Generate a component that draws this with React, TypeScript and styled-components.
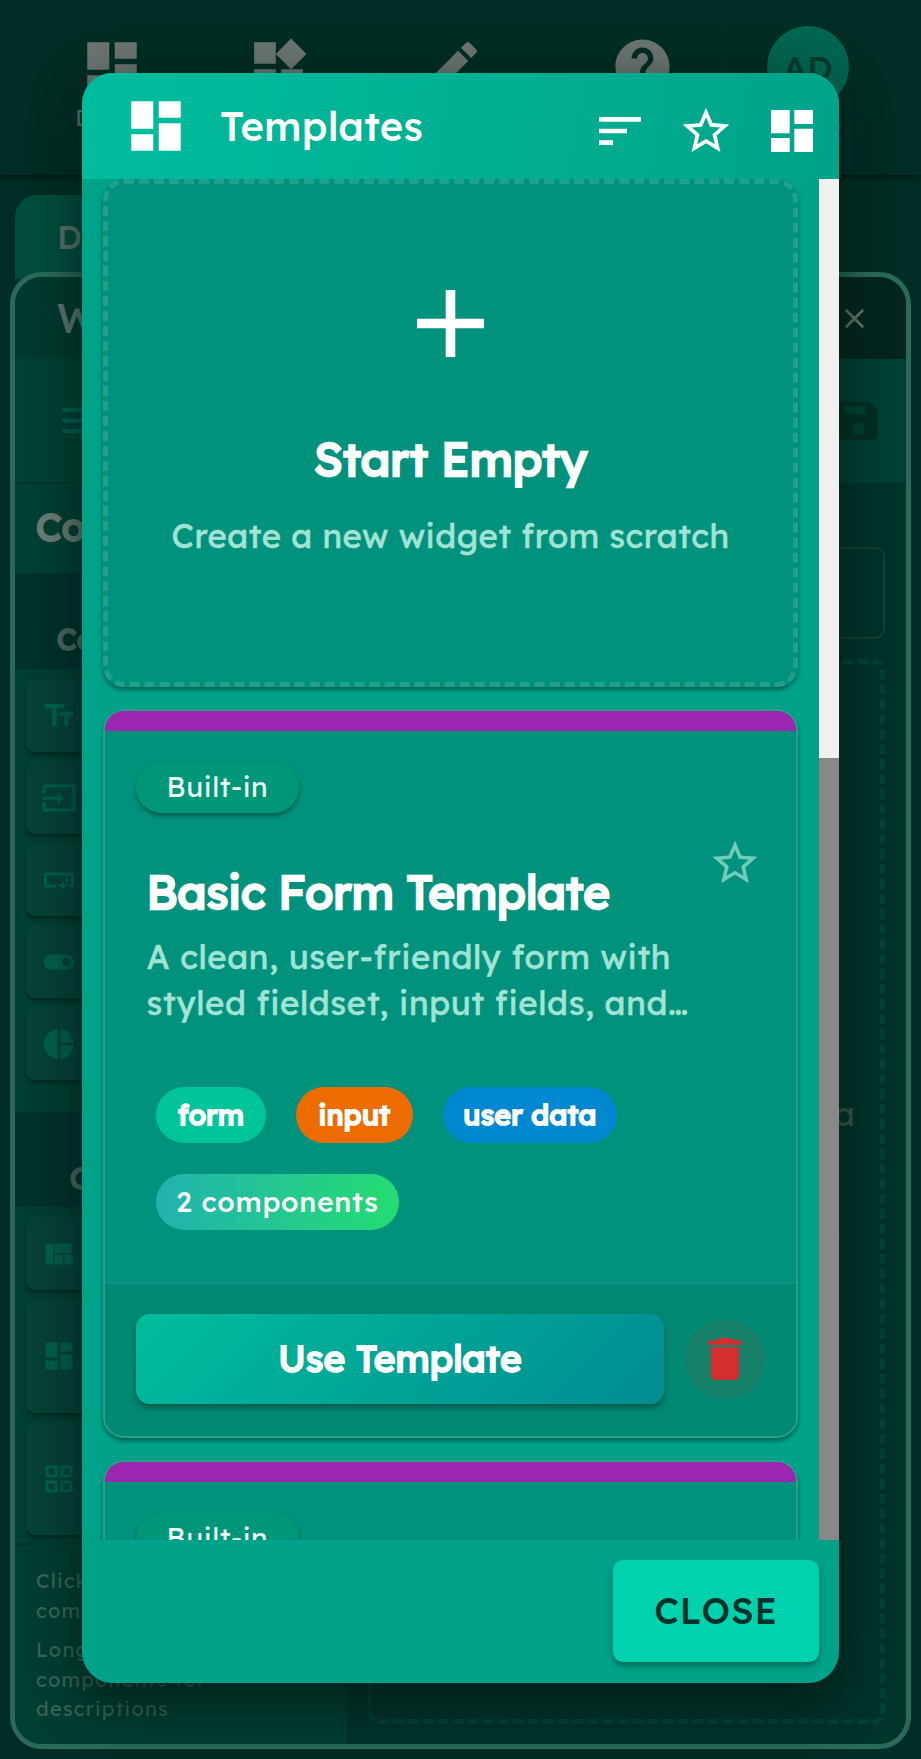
import React from 'react';
import styled, { createGlobalStyle, css } from 'styled-components';
import {
  MdAdd, MdClose, MdDashboard, MdDelete, MdEdit, MdGridView, MdHelp, MdInput, MdMenu,
  MdPieChart, MdSave, MdSmartButton, MdSort, MdStarBorder, MdTextFields, MdToggleOn,
  MdViewQuilt, MdWidgets,
} from 'react-icons/md';

const Global = createGlobalStyle`
  * { box-sizing: border-box; }
  body { margin: 0; background: #002d25; }
  button { font: inherit; border: 0; background: none; padding: 0; color: inherit; }
  h1, h2, h3, p { margin: 0; }
  svg { display: block; flex: none; }
`;

const Page = styled.div`
  position: relative;
  width: 921px;
  height: 1759px;
  overflow: hidden;
  background: #002d25;
  font-family: Lexend, Inter, 'Open Sans', sans-serif;
`;

/* Heavier look at the regular weight's advance widths. */
const emboldened = (stroke: number) => css`
  font-weight: 400;
  -webkit-text-stroke: ${stroke}px currentColor;
`;

/* ---------- application behind the dialog ---------- */

const TopBar = styled.header`
  display: flex;
  height: 175px;
  padding: 26px 30px 0 29px;
  background: #002d25;
  box-shadow: 0 2px 5px #001711;
`;

const NavItem = styled.div<{ $w: number; $before?: number }>`
  width: ${(p) => p.$w}px;
  margin-left: ${(p) => p.$before ?? 0}px;
  padding-top: 8px;
  display: flex;
  flex-direction: column;
  align-items: center;
  gap: 4px;
  color: #6b7572;
  font-size: 22px;
`;

const Account = styled.div`
  width: 82px;
  margin-left: 41px;
  display: flex;
  flex-direction: column;
  align-items: center;
  gap: 5px;
  color: #6b7572;
  font-size: 21px;
`;

const Avatar = styled.div`
  width: 82px;
  height: 82px;
  border-radius: 50%;
  background: #006650;
  color: #023b30;
  display: flex;
  align-items: center;
  justify-content: center;
  font-size: 34px;
  font-weight: 500;
`;

const NavRule = styled.div`
  width: 1px;
  height: 60px;
  background: #003128;
`;

const Tab = styled.div`
  width: 220px;
  height: 84px;
  margin: 20px 0 0 15px;
  padding: 20px 0 0 42px;
  border-radius: 22px 22px 0 0;
  background: #004d3e;
  color: #58756c;
  font-size: 33px;
  font-weight: 500;
  line-height: 44px;
`;

const Panel = styled.section`
  position: relative;
  width: 901px;
  height: 1477px;
  margin: -7px 0 0 10px;
  border: 5px solid #296a5b;
  border-radius: 32px;
  overflow: hidden;
  background: #00332b;
`;

const PanelHead = styled.div`
  height: 82px;
  padding: 0 35px 0 42px;
  display: flex;
  align-items: center;
  justify-content: space-between;
  background: linear-gradient(90deg, #003a2f, #04241d);
  color: #5f7770;
  font-size: 40px;
  font-weight: 500;
`;

const Tools = styled.div`
  height: 125px;
  padding: 0 22px 0 41px;
  display: flex;
  align-items: center;
  justify-content: space-between;
  background: #004134;
  color: #00604b;
  border-bottom: 2px solid #00382e;
`;

const SaveIcon = styled(MdSave)`
  color: #002e26;
`;

const Columns = styled.div`
  display: flex;
  height: 1260px;
`;

const Side = styled.aside`
  width: 332px;
  flex: none;
  background: #003e32;
`;

const SideTitle = styled.div`
  height: 89px;
  padding: 19px 0 0 21px;
  background: #004034;
  color: #6b7c76;
  font-size: 38px;
  ${emboldened(2.2)}
`;

const SideSection = styled.div<{ $indent: number; $h: number }>`
  height: ${(p) => p.$h}px;
  padding: 48px 0 0 ${(p) => p.$indent}px;
  background: #00322b;
  color: #4d6a62;
  font-size: 29px;
  line-height: 36px;
  ${emboldened(1.8)}
`;

const Items = styled.div<{ $h: number }>`
  height: ${(p) => p.$h}px;
  padding: 10px 11px 0;
  display: flex;
  flex-direction: column;
  gap: 9px;
`;

const Item = styled.div<{ $h?: number }>`
  height: ${(p) => p.$h ?? 73}px;
  flex: none;
  padding-left: 15px;
  display: flex;
  align-items: center;
  border-radius: 9px;
  background: #064237;
  color: #00604b;
  box-shadow: 0 3px 3px #002c24;
`;

const Hints = styled.div`
  border-top: 2px solid #00352b;
  padding: 21px 21px;
  color: #3a665b;
  font-size: 20px;
  line-height: 29.5px;
  letter-spacing: 1.25px;

  p + p { margin-top: 10px; }
`;

const Main = styled.div`
  flex: 1;
  min-width: 0;
  padding: 63px 21px 0 21px;
`;

const Field = styled.div`
  height: 92px;
  border: 2px solid #183f36;
  border-radius: 10px;
`;

const Canvas = styled.div`
  height: 1065px;
  margin-top: 20px;
  padding: 428px 25px 0 0;
  border: 5px dashed #004236;
  border-radius: 10px;
  text-align: right;
  color: #3c5751;
  font-size: 33px;
  line-height: 44px;
`;

const CanvasHint = styled.p`
  padding: 74px 14px 0 0;
  font-size: 28px;
`;

/* ---------- dialog ---------- */

const Dialog = styled.div`
  position: absolute;
  left: 82px;
  top: 73px;
  width: 757px;
  height: 1610px;
  display: flex;
  flex-direction: column;
  border-radius: 31px;
  overflow: hidden;
  background: #00a389;
  box-shadow: 0 26px 40px rgba(0, 25, 20, 0.5), 0 8px 50px rgba(0, 25, 20, 0.35);
`;

const DialogHead = styled.div`
  height: 106px;
  flex: none;
  padding: 0 19px 0 41px;
  display: flex;
  align-items: center;
  background: linear-gradient(100deg, #00bd9d, #00a389);
  color: #fff;
`;

const DialogTitle = styled.h1`
  flex: 1;
  margin-left: 31px;
  font-size: 40px;
  font-weight: 500;
  line-height: 50px;
  letter-spacing: 0.25px;
`;

const HeadActions = styled.div`
  display: flex;
  gap: 30px;
  padding-top: 10px;
`;

const Body = styled.div`
  height: 1361px;
  flex: none;
  display: flex;
  overflow: hidden;
`;

const List = styled.div`
  flex: 1;
  padding: 0 21px;
  display: flex;
  flex-direction: column;
  gap: 22px;
`;

const Track = styled.div`
  width: 20.5px;
  background: #f0f0f0;
  padding-top: 579px;
`;

const Thumb = styled.div`
  height: 100%;
  background: #888;
`;

const cardBase = css`
  flex: none;
  border-radius: 21px;
  background: #00927c;
  box-shadow: 0 3px 4px rgba(0, 60, 48, 0.6);
`;

const EmptyCard = styled.div`
  ${cardBase}
  height: 508px;
  padding-top: 82px;
  border: 5px dashed #1fa18b;
  display: flex;
  flex-direction: column;
  align-items: center;
  gap: 25px;
`;

const AddIcon = styled(MdAdd)`
  margin-bottom: 24px;
  color: #fff;
`;

const CardTitle = styled.h2<{ $size: number }>`
  color: #fff;
  font-size: ${(p) => p.$size}px;
  line-height: 58px;
  ${emboldened(2.4)}
`;

const Muted = styled.p<{ $track?: number }>`
  color: #a3e3d6;
  font-size: 33px;
  line-height: 46px;
  letter-spacing: ${(p) => p.$track ?? 0.5}px;
  -webkit-text-stroke: 0.5px currentColor;
`;

const Card = styled.article`
  ${cardBase}
  height: 729px;
  border: 2.5px solid #26a08b;
  overflow: hidden;
  display: flex;
  flex-direction: column;
`;

const Stripe = styled.div`
  height: 20px;
  flex: none;
  background: #9b27b0;
`;

const CardBody = styled.div`
  height: 551px;
  flex: none;
  padding: 31px 31px 0;
`;

const Badge = styled.span`
  display: flex;
  align-items: center;
  justify-content: center;
  width: 163px;
  height: 51px;
  padding-bottom: 2px;
  border-radius: 26px;
  background: #009778;
  color: #effffb;
  font-size: 28px;
  letter-spacing: 0.6px;
  box-shadow: 0 3px 4px rgba(0, 60, 48, 0.6);
`;

const Heading = styled.div`
  display: flex;
  justify-content: space-between;
  margin-top: 23px;
  padding: 0 3px 0 10.5px;
`;

const HeadingText = styled.div`
  display: flex;
  flex-direction: column;
  gap: 13px;
  padding-top: 27px;
  white-space: nowrap;
`;

const Star = styled(MdStarBorder)`
  color: #6fcdbb;
`;

const Tags = styled.div`
  display: flex;
  flex-wrap: wrap;
  gap: 31px 30px;
  margin: 61px 0 0 20px;
`;

const Tag = styled.span<{ $bg: string; $w: number; $light?: boolean }>`
  display: flex;
  align-items: center;
  justify-content: center;
  width: ${(p) => p.$w}px;
  height: 56px;
  padding-bottom: 2px;
  border-radius: 28px;
  background: ${(p) => p.$bg};
  color: #fff;
  font-size: 28px;
  ${(p) => (p.$light
    ? css`font-weight: 500; letter-spacing: 0.75px;`
    : css`${emboldened(2)} letter-spacing: 0.4px;`)}
`;

const CardFoot = styled.div`
  flex: 1;
  padding: 30px 31px 0 31px;
  display: flex;
  align-items: flex-start;
  gap: 21px;
  border-top: 2px solid #0b947e;
  background: #008a73;
`;

const UseButton = styled.button`
  width: 528px;
  height: 90px;
  padding-bottom: 2px;
  border-radius: 14px;
  background: linear-gradient(135deg, #00bd9b, #008c93);
  color: #fff;
  font-size: 37px;
  letter-spacing: 0.15px;
  ${emboldened(2)}
  box-shadow: 0 4px 6px rgba(0, 50, 42, 0.55);
`;

const DeleteButton = styled.button`
  width: 80px;
  height: 80px;
  margin-top: 5px;
  border-radius: 50%;
  display: flex;
  align-items: center;
  justify-content: center;
  background: #178069;
  color: #d32f2f;
`;

const DialogFoot = styled.div`
  flex: 1;
  display: flex;
  justify-content: flex-end;
  padding: 20px 20px 0;
`;

const CloseButton = styled.button`
  width: 206px;
  height: 102px;
  padding-bottom: 2px;
  border-radius: 10px;
  background: #00d2ad;
  color: #04302a;
  font-size: 36px;
  font-weight: 500;
  letter-spacing: 0.9px;
  box-shadow: 0 4px 6px rgba(0, 60, 48, 0.55);
`;

function TemplateCard() {
  return (
    <Card>
      <Stripe />
      <CardBody>
        <Badge>Built-in</Badge>
        <Heading>
          <HeadingText>
            <CardTitle $size={45.7}>Basic Form Template</CardTitle>
            <Muted $track={0.7}>A clean, user-friendly form with<br />styled fieldset, input fields, and…</Muted>
          </HeadingText>
          <Star size={54} />
        </Heading>
        <Tags>
          <Tag $w={110} $bg="#00c49a">form</Tag>
          <Tag $w={117} $bg="#ed6c02">input</Tag>
          <Tag $w={174} $bg="#0288d1">user data</Tag>
          <Tag $w={243} $light $bg="linear-gradient(90deg, #22b2b0, #25dc72)">2 components</Tag>
        </Tags>
      </CardBody>
      <CardFoot>
        <UseButton>Use Template</UseButton>
        <DeleteButton aria-label="Delete"><MdDelete size={56} /></DeleteButton>
      </CardFoot>
    </Card>
  );
}

export default function App() {
  return (
    <Page>
      <Global />
      <TopBar>
        <NavItem $w={166}><MdDashboard size={66} />Design</NavItem>
        <NavItem $w={166}><MdWidgets size={65} />Widgets</NavItem>
        <NavItem $w={182}><MdEdit size={65} />Edit</NavItem>
        <NavItem $w={166} $before={16}><MdHelp size={65} />Help</NavItem>
        <NavRule />
        <Account><Avatar>AD</Avatar>Admin</Account>
      </TopBar>
      <Tab>Dashboard</Tab>
      <Panel>
        <PanelHead>Widget<MdClose size={33} /></PanelHead>
        <Tools><MdMenu size={51} /><SaveIcon size={51} /></Tools>
        <Columns>
          <Side>
            <SideTitle>Components</SideTitle>
            <SideSection $indent={42} $h={96}>Content</SideSection>
            <Items $h={443}>
              <Item><MdTextFields size={36} /></Item>
              <Item><MdInput size={36} /></Item>
              <Item><MdSmartButton size={36} /></Item>
              <Item><MdToggleOn size={36} /></Item>
              <Item><MdPieChart size={36} /></Item>
            </Items>
            <SideSection $indent={55} $h={95}>Containers</SideSection>
            <Items $h={336}>
              <Item><MdViewQuilt size={36} /></Item>
              <Item $h={114}><MdDashboard size={36} /></Item>
              <Item $h={113}><MdGridView size={36} /></Item>
            </Items>
            <Hints>
              <p>Click to add<br />components</p>
              <p>Long press<br />components for<br />descriptions</p>
            </Hints>
          </Side>
          <Main>
            <Field />
            <Canvas>
              Drag components to add a
              <CanvasHint>Pick one from the left column</CanvasHint>
            </Canvas>
          </Main>
        </Columns>
      </Panel>
      <Dialog>
        <DialogHead>
          <MdDashboard size={66} />
          <DialogTitle>Templates</DialogTitle>
          <HeadActions>
            <MdSort size={56} />
            <MdStarBorder size={56} />
            <MdDashboard size={56} />
          </HeadActions>
        </DialogHead>
        <Body>
          <List>
            <EmptyCard>
              <AddIcon size={115} />
              <CardTitle $size={46.7}>Start Empty</CardTitle>
              <Muted>Create a new widget from scratch</Muted>
            </EmptyCard>
            <TemplateCard />
            <TemplateCard />
          </List>
          <Track><Thumb /></Track>
        </Body>
        <DialogFoot><CloseButton>CLOSE</CloseButton></DialogFoot>
      </Dialog>
    </Page>
  );
}
